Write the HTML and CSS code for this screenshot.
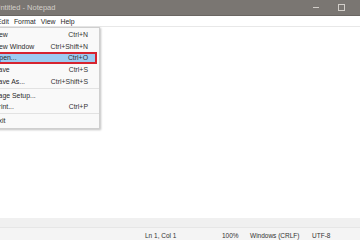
FILE: index.html
```html
<!DOCTYPE html>
<html>
<head>
<meta charset="utf-8">
<link rel="stylesheet" href="styles.css">
</head>
<body>
<div class="window">
  <div class="titlebar">
    <span class="title">Untitled - Notepad</span>
    <div class="controls">
      <span class="ctl min"></span>
      <span class="ctl max"></span>
    </div>
  </div>
  <div class="menubar">
    <span class="mi">Edit</span>
    <span class="mi">Format</span>
    <span class="mi">View</span>
    <span class="mi">Help</span>
  </div>
  <div class="editor"></div>
  <div class="hscroll"></div>
  <div class="statusbar">
    <span class="sb pos">Ln 1, Col 1</span>
    <span class="sb zoom">100%</span>
    <span class="sb eol">Windows (CRLF)</span>
    <span class="sb enc">UTF-8</span>
  </div>
  <div class="dropdown">
    <div class="row"><span>New</span><span class="key">Ctrl+N</span></div>
    <div class="row"><span>New Window</span><span class="key">Ctrl+Shift+N</span></div>
    <div class="row active"><span>Open...</span><span class="key">Ctrl+O</span></div>
    <div class="row"><span>Save</span><span class="key">Ctrl+S</span></div>
    <div class="row"><span>Save As...</span><span class="key">Ctrl+Shift+S</span></div>
    <div class="sep"></div>
    <div class="row"><span>Page Setup...</span><span class="key"></span></div>
    <div class="row"><span>Print...</span><span class="key">Ctrl+P</span></div>
    <div class="sep"></div>
    <div class="row"><span>Exit</span><span class="key"></span></div>
  </div>
</div>
</body>
</html>
```
FILE: styles.css
```css
html, body {
  margin: 0;
  padding: 0;
  width: 360px;
  height: 240px;
  overflow: hidden;
  background: #ffffff;
}
.window {
  position: relative;
  width: 360px;
  height: 240px;
  display: flex;
  flex-direction: column;
  font-family: "Liberation Sans", Arial, sans-serif;
  font-size: 6.9px;
  color: #2a2a2a;
  overflow: hidden;
  white-space: nowrap;
}
.titlebar {
  height: 15px;
  flex: none;
  background: #7a7672;
  border-bottom: 1px solid #6a6662;
  display: flex;
  align-items: center;
  justify-content: space-between;
}
.title {
  margin-left: -5px;
  color: #d2cec9;
  font-size: 7.5px;
}
.controls {
  display: flex;
  align-items: center;
  gap: 19px;
  margin-right: 15px;
}
.ctl.min {
  width: 6px;
  height: 1px;
  background: #d2cec9;
}
.ctl.max {
  width: 5px;
  height: 5px;
  border: 1px solid #d2cec9;
}
.menubar {
  height: 10px;
  flex: none;
  display: flex;
  align-items: center;
  gap: 5px;
  margin-left: -3px;
  border-bottom: 1px solid #e8e8e8;
  font-size: 6.9px;
}
.editor {
  flex: 1;
  background: #ffffff;
}
.hscroll {
  height: 9px;
  flex: none;
  background: #f0f0f0;
}
.statusbar {
  height: 13px;
  flex: none;
  background: #f4f4f4;
  border-top: 1px solid #e6e6e6;
  display: flex;
  align-items: center;
  padding-top: 2px;
  box-sizing: border-box;
  font-size: 6.5px;
  color: #333333;
}
.sb.pos { margin-left: 145px; width: 77px; }
.sb.zoom { width: 28px; }
.sb.eol { width: 62px; }
.dropdown {
  position: absolute;
  left: -10px;
  top: 27px;
  width: 108px;
  background: #f9f9f9;
  border: 1px solid #cfcfcf;
  box-shadow: 1px 1px 2px rgba(0,0,0,0.25);
  padding: 0.5px 0 1px;
  font-size: 6.9px;
}
.row {
  height: 11.75px;
  display: flex;
  align-items: center;
  justify-content: space-between;
  padding: 0 9px 0 3px;
  box-sizing: border-box;
  margin-right: 2px;
}
.row.active {
  background: #9dcbf1;
  border: 2px solid #d62430;
  padding: 0 7px 0 1px;
}
.key { color: #333333; }
.sep {
  height: 1px;
  background: #e2e2e2;
  margin: 0.5px 0;
}
```
